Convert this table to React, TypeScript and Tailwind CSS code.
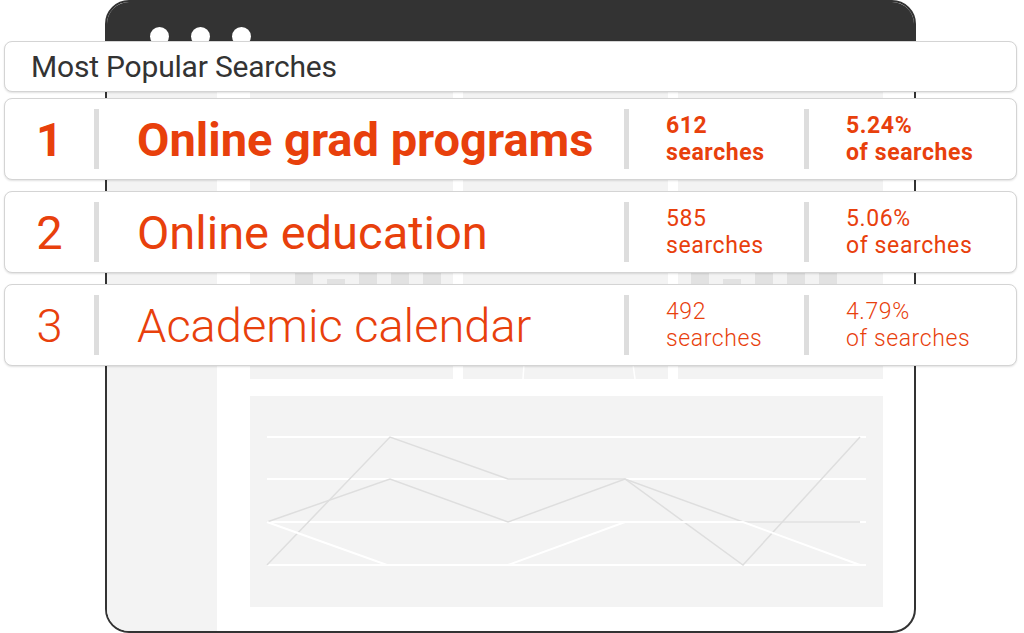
import React from "react";

const ORANGE = "text-[#e8400c]";

function Divider() {
  return <div className="w-[5px] h-[60px] bg-[#dddddd] shrink-0" />;
}

type Row = {
  n: string;
  title: string;
  count: string;
  pct: string;
  weight: string;
};

const rows: Row[] = [
  { n: "1", title: "Online grad programs", count: "612", pct: "5.24%", weight: "font-bold" },
  { n: "2", title: "Online education", count: "585", pct: "5.06%", weight: "font-normal" },
  { n: "3", title: "Academic calendar", count: "492", pct: "4.79%", weight: "font-light" },
];

function Bars({ offset }: { offset: string }) {
  const hs = [110, 80, 120, 95, 130];
  return (
    <div className={`absolute bottom-[20px] flex items-end gap-[14px] ${offset}`}>
      {hs.map((h, i) => (
        <div key={i} className="w-[18px] bg-[#e2e2e2]" style={{ height: h }} />
      ))}
    </div>
  );
}

export default function App() {
  return (
    <div
      className="relative w-[1024px] h-[633px] bg-white overflow-hidden"
      style={{ fontFamily: "Roboto, 'Liberation Sans', sans-serif" }}
    >
      {/* Browser frame */}
      <div className="pl-[105px]">
        <div className="w-[811px] h-[633px] border-2 border-[#333333] rounded-[24px] overflow-hidden flex flex-col bg-white">
          <div className="h-[60px] bg-[#333333] shrink-0 flex items-start pl-[43px] pt-[25px] gap-[22px]">
            <div className="w-[19px] h-[19px] rounded-full bg-white" />
            <div className="w-[19px] h-[19px] rounded-full bg-white" />
            <div className="w-[19px] h-[19px] rounded-full bg-white" />
          </div>
          <div className="flex flex-1">
            <div className="w-[110px] bg-[#f3f3f3] shrink-0" />
            <div className="flex flex-col pl-[33px] pt-[28px]">
              <div className="flex gap-[10px] h-[289px]">
                <div className="relative w-[203px] bg-[#f3f3f3]">
                  <Bars offset="left-[45px]" />
                </div>
                <div className="relative w-[205px] bg-[#f3f3f3]">
                  <svg className="absolute left-0 top-0" width="205" height="289">
                    <line x1="60" y1="289" x2="66" y2="200" stroke="#ffffff" strokeWidth="1.5" />
                    <line x1="172" y1="289" x2="160" y2="200" stroke="#ffffff" strokeWidth="1.5" />
                  </svg>
                </div>
                <div className="relative w-[205px] bg-[#f3f3f3]">
                  <Bars offset="left-[13px]" />
                </div>
              </div>
              <div className="mt-[17px] w-[633px] h-[211px] bg-[#f3f3f3]">
                <svg width="633" height="211">
                  {[41, 83, 126, 169].map((y) => (
                    <line key={y} x1="17" y1={y} x2="616" y2={y} stroke="#ffffff" strokeWidth="2" />
                  ))}
                  <polyline
                    points="17,169 140,41 258,83 375,83 493,169 610,41"
                    fill="none"
                    stroke="#dedede"
                    strokeWidth="1.5"
                  />
                  <polyline
                    points="17,126 140,83 258,126 375,83 493,126 610,126"
                    fill="none"
                    stroke="#dedede"
                    strokeWidth="1.5"
                  />
                  <polyline
                    points="17,126 137,169 258,169 375,126 493,126 610,169"
                    fill="none"
                    stroke="#ffffff"
                    strokeWidth="2"
                  />
                </svg>
              </div>
            </div>
          </div>
        </div>
      </div>

      {/* Overlay cards */}
      <div className="absolute left-[4px] top-[41px] w-[1013px] flex flex-col">
        <div className="h-[51px] bg-white border border-[#d4d4d4] rounded-[8px] shadow-[0_1px_2px_rgba(0,0,0,0.12)] flex items-center pl-[26px]">
          <span className="text-[30px] text-[#333333] leading-none tracking-[-0.2px]">Most Popular Searches</span>
        </div>
        <div className="mt-[6px] flex flex-col gap-[11px]">
          {rows.map((r) => (
            <div
              key={r.n}
              className={`h-[82px] bg-white border border-[#d4d4d4] rounded-[8px] shadow-[0_1px_2px_rgba(0,0,0,0.12)] flex items-center ${ORANGE} ${r.weight}`}
            >
              <div className="w-[89px] text-center text-[47px] leading-none shrink-0">{r.n}</div>
              <Divider />
              <div className="w-[525px] pl-[38px] text-[47px] leading-none whitespace-nowrap shrink-0">{r.title}</div>
              <Divider />
              <div className="w-[175px] pl-[37px] text-[23px] leading-[27px] tracking-[0.6px] shrink-0">
                {r.count}
                <br />
                searches
              </div>
              <Divider />
              <div className="pl-[37px] text-[23px] leading-[27px] tracking-[0.6px] whitespace-nowrap">
                {r.pct}
                <br />
                of searches
              </div>
            </div>
          ))}
        </div>
      </div>
    </div>
  );
}
